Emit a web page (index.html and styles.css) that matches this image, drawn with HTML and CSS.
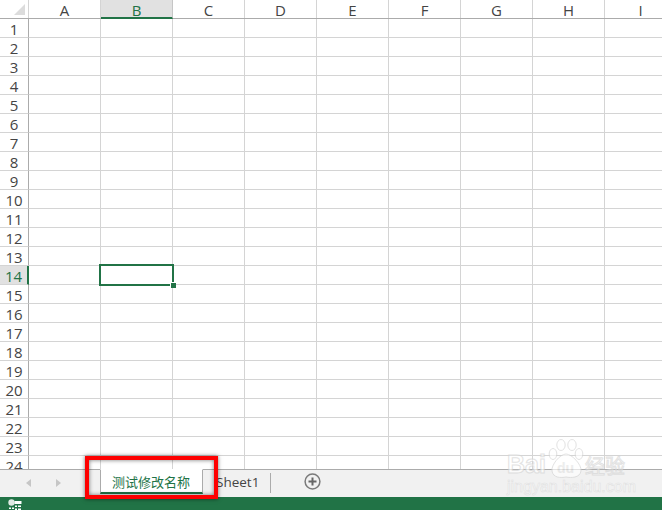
FILE: index.html
```html
<!DOCTYPE html>
<html lang="zh">
<head>
<meta charset="utf-8">
<title>Sheet</title>
<link rel="stylesheet" href="styles.css">
</head>
<body>
<div class="app">
  <div class="sheet">
    <div class="col-head">
      <div class="corner"><svg width="11" height="11" viewBox="0 0 11 11"><path d="M11 0V11H0Z" fill="#dcdcdc"/></svg></div>
      <div class="col">A</div><div class="col active">B</div><div class="col">C</div><div class="col">D</div><div class="col">E</div><div class="col">F</div><div class="col">G</div><div class="col">H</div><div class="col">I</div>
    </div>
    <div class="row"><div class="num">1</div><div class="cells"></div></div>
    <div class="row"><div class="num">2</div><div class="cells"></div></div>
    <div class="row"><div class="num">3</div><div class="cells"></div></div>
    <div class="row"><div class="num">4</div><div class="cells"></div></div>
    <div class="row"><div class="num">5</div><div class="cells"></div></div>
    <div class="row"><div class="num">6</div><div class="cells"></div></div>
    <div class="row"><div class="num">7</div><div class="cells"></div></div>
    <div class="row"><div class="num">8</div><div class="cells"></div></div>
    <div class="row"><div class="num">9</div><div class="cells"></div></div>
    <div class="row"><div class="num">10</div><div class="cells"></div></div>
    <div class="row"><div class="num">11</div><div class="cells"></div></div>
    <div class="row"><div class="num">12</div><div class="cells"></div></div>
    <div class="row"><div class="num">13</div><div class="cells"></div></div>
    <div class="row"><div class="num active">14</div><div class="cells"></div></div>
    <div class="row"><div class="num">15</div><div class="cells"></div></div>
    <div class="row"><div class="num">16</div><div class="cells"></div></div>
    <div class="row"><div class="num">17</div><div class="cells"></div></div>
    <div class="row"><div class="num">18</div><div class="cells"></div></div>
    <div class="row"><div class="num">19</div><div class="cells"></div></div>
    <div class="row"><div class="num">20</div><div class="cells"></div></div>
    <div class="row"><div class="num">21</div><div class="cells"></div></div>
    <div class="row"><div class="num">22</div><div class="cells"></div></div>
    <div class="row"><div class="num">23</div><div class="cells"></div></div>
    <div class="row"><div class="num">24</div><div class="cells"></div></div>
    <div class="selection"><span class="handle"></span></div>
  </div>
  <div class="tabbar">
    <div class="nav">
      <svg width="6" height="8" viewBox="0 0 6 8"><path d="M5 0V8L0 4Z" fill="#c6c6c6"/></svg>
      <svg width="6" height="8" viewBox="0 0 6 8"><path d="M1 0V8L6 4Z" fill="#c6c6c6"/></svg>
    </div>
    <div class="tab">测试修改名称</div>
    <div class="tab-plain">Sheet1</div>
    <div class="add"><svg width="17" height="17" viewBox="0 0 17 17"><circle cx="8.5" cy="8.5" r="7.4" fill="none" stroke="#7a7a7a" stroke-width="1.5"/><path d="M8.5 4.5V12.5M4.5 8.5H12.5" stroke="#666" stroke-width="2"/></svg></div>
  </div>
  <div class="status">
    <svg width="14" height="11" viewBox="0 0 14 11"><circle cx="3.5" cy="3.5" r="3.2" fill="#dfeae4"/><path d="M6.5 2H13.5V5H6.5Z" fill="#fff"/><path d="M1 8.5H3V10H1ZM4 8.5H6V10H4ZM7 6.5H9V8H7ZM10 6.5H13V8H10ZM7 9.5H9V11H7ZM10 9.5H13V11H10Z" fill="#fff"/></svg>
  </div>
  <div class="callout"></div>
  <div class="watermark">
    <span class="wm-bai">Bai</span>
    <div class="wm-paw">
      <svg width="36" height="40" viewBox="0 0 36 40">
        <g fill="#fff" stroke="#d4d4d4" stroke-width="1">
          <ellipse cx="5" cy="15" rx="3.8" ry="5.5"/>
          <ellipse cx="13" cy="6" rx="4.2" ry="5.5"/>
          <ellipse cx="24" cy="6" rx="4.2" ry="5.5"/>
          <ellipse cx="31" cy="15" rx="3.8" ry="5.5"/>
          <path d="M18 15C12 15 3 26 4 32C5 39 13 39 18 38C23 39 32 39 33 32C34 26 24 15 18 15Z"/>
        </g>
      </svg>
      <span class="wm-du">du</span>
    </div>
    <span class="wm-cn">经验</span>
    <div class="wm-url">jingyan.baidu.com</div>
  </div>
</div>
</body>
</html>
```
FILE: styles.css
```css
* { box-sizing: border-box; }
html, body { margin: 0; padding: 0; }
body { background: #fff; font-family: "Open Sans", "Liberation Sans", sans-serif; overflow: hidden; }
.app { position: relative; width: 662px; height: 510px; display: flex; flex-direction: column; overflow: hidden; }
.sheet { position: relative; height: 469px; overflow: hidden; flex: none; }
.col-head { display: flex; height: 19px; border-bottom: 1px solid #ababab; }
.corner { width: 29px; flex: none; display: flex; justify-content: flex-end; align-items: flex-end; padding: 0 3px 3px 0; border-right: 1px solid #d4d4d4; }
.col { width: 72px; flex: none; font-size: 15px; line-height: 20px; text-align: center; color: #444; border-right: 1px solid #d4d4d4; }
.col.active { background: #e1e1e1; color: #217346; border-bottom: 2px solid #217346; height: 19px; border-right-color: #c6c6c6; }
.row { display: flex; height: 19px; }
.num { width: 29px; flex: none; font-size: 15px; line-height: 20px; text-align: center; color: #444; background: #fff; border-right: 1px solid #ababab; border-bottom: 1px solid #d4d4d4; }
.num.active { background: #e1e1e1; color: #217346; border-right: 2px solid #217346; }
.cells { flex: 1; border-bottom: 1px solid #d4d4d4; background-image: repeating-linear-gradient(to right, transparent 0, transparent 71px, #d4d4d4 71px, #d4d4d4 72px); }
.selection { position: absolute; left: 99px; top: 264px; width: 75px; height: 22px; border: 2px solid #217346; }
.handle { position: absolute; right: -4px; bottom: -4px; width: 6px; height: 6px; background: #217346; border-left: 1px solid #fff; border-top: 1px solid #fff; }
.tabbar { height: 28px; flex: none; background: #f1f1f1; border-top: 1px solid #ababab; display: flex; align-items: flex-start; font-size: 13px; }
.nav { width: 100px; flex: none; display: flex; gap: 23px; padding: 9px 0 0 26px; }
.tab { width: 103px; height: 25px; flex: none; margin-top: -1px; padding-right: 1px; background: #fff; border: 1px solid #ababab; border-top-color: #fff; border-bottom: 2px solid #217346; text-align: center; color: #217346; line-height: 24px; font-family: "Noto Sans CJK SC", sans-serif; }
.tab-plain { width: 68px; height: 20px; flex: none; margin-top: 3px; padding-left: 13px; line-height: 19px; color: #444; font-size: 13.5px; border-right: 1px solid #ababab; }
.add { margin: 3px 0 0 33px; line-height: 0; }
.status { height: 13px; flex: none; background: #217346; padding: 2px 0 0 8px; line-height: 0; }
.callout { position: absolute; left: 85px; top: 456px; width: 133px; height: 43px; border: 4px solid #fe0000; box-shadow: 0 0 4px rgba(0,0,0,.55), inset 0 0 4px rgba(0,0,0,.55); }
.watermark { position: absolute; left: 507px; top: 439px; width: 122px; height: 58px; display: grid; grid-template-columns: 41px 37px 44px; grid-template-rows: 40px 16px; gap: 0; align-items: end; opacity: .65; color: #fff; }
.wm-paw { position: relative; height: 40px; line-height: 0; }
.wm-du { position: absolute; left: 9px; top: 20px; font: 700 14px/18px "Liberation Sans", sans-serif; color: #e4e4e4; }
.wm-bai, .wm-cn { font-family: "Liberation Sans", sans-serif; font-size: 25px; font-weight: 700; line-height: 26px; color: #fff; -webkit-text-stroke: 1px #d4d4d4; margin-bottom: 2px; }
.wm-cn { font-family: "Noto Sans CJK SC", sans-serif; font-size: 20px; font-weight: 400; margin-bottom: 0; }
.wm-url { grid-column: 1 / -1; font-size: 16px; line-height: 16px; margin-top: 1px; font-family: "Liberation Sans", sans-serif; -webkit-text-stroke: .6px #d8d8d8; color: #fff; white-space: nowrap; }
```
